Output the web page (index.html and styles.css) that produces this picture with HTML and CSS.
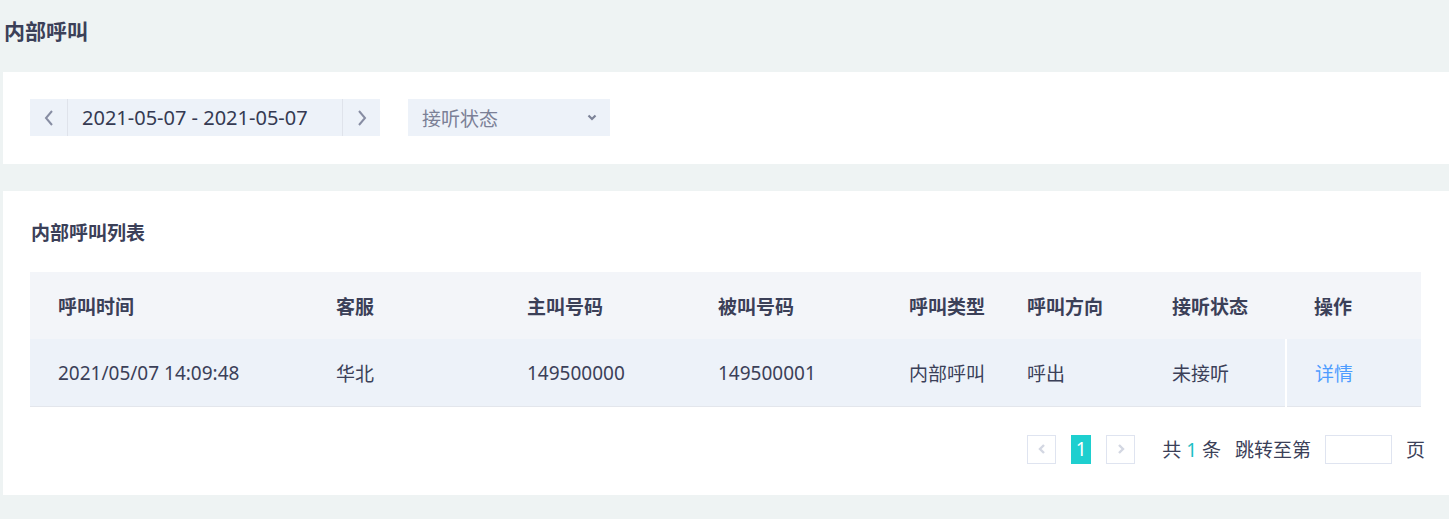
FILE: index.html
```html
<!DOCTYPE html>
<html>
<head>
  <meta charset="utf-8">
  <title>内部呼叫</title>
  <link rel="stylesheet" href="styles.css">
</head>
<body>
  <h2 class="page-title">内部呼叫</h2>

  <div class="card filter-card">
    <div class="date-range">
      <span class="date-arrow">
        <svg width="12" height="18" viewBox="0 0 12 18"><path d="M9 2 L3 9 L9 16" fill="none" stroke="#878da3" stroke-width="2"/></svg>
      </span>
      <span class="date-text">2021-05-07 - 2021-05-07</span>
      <span class="date-arrow right">
        <svg width="12" height="18" viewBox="0 0 12 18"><path d="M3 2 L9 9 L3 16" fill="none" stroke="#878da3" stroke-width="2"/></svg>
      </span>
    </div>

    <div class="select-box">
      <span class="placeholder">接听状态</span>
      <svg width="10" height="7" viewBox="0 0 10 7"><path d="M1.5 1.5 L5 5 L8.5 1.5" fill="none" stroke="#7d8398" stroke-width="2.2"/></svg>
    </div>
  </div>

  <div class="card list-card">
    <h3 class="list-title">内部呼叫列表</h3>

    <table class="call-table">
      <thead>
        <tr>
          <th class="c-time">呼叫时间</th>
          <th class="c-agent">客服</th>
          <th class="c-num">主叫号码</th>
          <th class="c-num">被叫号码</th>
          <th class="c-type">呼叫类型</th>
          <th class="c-dir">呼叫方向</th>
          <th class="c-state">接听状态</th>
          <th class="c-op">操作</th>
        </tr>
      </thead>
      <tbody>
        <tr>
          <td>2021/05/07 14:09:48</td>
          <td>华北</td>
          <td>149500000</td>
          <td>149500001</td>
          <td>内部呼叫</td>
          <td>呼出</td>
          <td>未接听</td>
          <td class="op-cell"><a href="#">详情</a></td>
        </tr>
      </tbody>
    </table>

    <div class="pager">
      <span class="page-btn">
        <svg width="10" height="12" viewBox="0 0 10 12"><path d="M7 2 L3 6 L7 10" fill="none" stroke="#d3d7e2" stroke-width="2.4"/></svg>
      </span>
      <span class="page-num">1</span>
      <span class="page-btn">
        <svg width="10" height="12" viewBox="0 0 10 12"><path d="M3 2 L7 6 L3 10" fill="none" stroke="#d3d7e2" stroke-width="2.4"/></svg>
      </span>
      <span class="total">共 <em>1</em> 条</span>
      <span class="jump">跳转至第</span>
      <input class="jump-input" type="text">
      <span class="jump-unit">页</span>
    </div>
  </div>
</body>
</html>
```

FILE: styles.css
```css
body {
  margin: 0;
  padding: 0 0 0 3px;
  background: #eef3f3;
  font-family: "Noto Sans", "Noto Sans CJK SC", sans-serif;
  color: #3b4058;
  font-size: 19px;
}

.page-title {
  margin: 0;
  height: 72px;
  line-height: 62px;
  padding-left: 1px;
  font-size: 21px;
  font-weight: bold;
  color: #3b4058;
}

.card {
  background: white;
}

.filter-card {
  height: 92px;
  padding: 27px 0 0 27px;
  box-sizing: border-box;
  display: flex;
  gap: 28px;
  margin-bottom: 27px;
}

.date-range {
  display: flex;
  height: 37px;
  width: 350px;
  background: #edf2f9;
  align-items: stretch;
}

.date-arrow {
  width: 37px;
  display: flex;
  align-items: center;
  justify-content: center;
  border-right: 1px solid #dfe3eb;
}

.date-arrow.right {
  border-right: none;
  border-left: 1px solid #dfe3eb;
}

.date-text {
  flex: 1;
  line-height: 37px;
  padding-left: 14px;
  font-size: 20px;
  color: #353a52;
  white-space: nowrap;
}

.select-box {
  width: 202px;
  height: 37px;
  background: #edf2f9;
  display: flex;
  align-items: center;
  justify-content: space-between;
  padding: 0 13px 0 14px;
  box-sizing: border-box;
}

.placeholder {
  color: #7b8096;
  font-size: 19px;
}

.list-card {
  height: 304px;
  padding: 27px 27px 0 27px;
  box-sizing: border-box;
}

.list-title {
  margin: 0 0 0 1px;
  font-size: 19px;
  font-weight: bold;
  line-height: 30px;
  height: 54px;
}

.call-table {
  width: 1391px;
  border-collapse: collapse;
  font-size: 19px;
}

.call-table th,
.call-table td {
  height: 67px;
  padding: 0 0 0 28px;
  text-align: left;
  white-space: nowrap;
}

.call-table th {
  background: #f3f5f9;
  font-weight: bold;
}

.call-table td {
  background: #edf2f9;
  border-bottom: 1px solid #e3e6ec;
  color: #3b4058;
}

.c-time { width: 250px; }
.c-agent { width: 163px; }
.c-num { width: 163px; }
.c-type { width: 90px; }
.c-dir { width: 117px; }
.c-state { width: 114px; }

.op-cell {
  border-left: 2px solid white;
}

.op-cell a {
  color: #4d9cff;
  text-decoration: none;
}

.pager {
  display: flex;
  justify-content: flex-end;
  align-items: center;
  margin-top: 27px;
  margin-right: -3px;
  height: 30px;
}

.page-btn {
  width: 29px;
  height: 29px;
  border: 1px solid #dfe4f0;
  box-sizing: border-box;
  display: flex;
  align-items: center;
  justify-content: center;
}

.page-num {
  width: 20px;
  height: 29px;
  line-height: 29px;
  background: #1ecfcf;
  color: white;
  text-align: center;
  margin: 0 15px;
  font-size: 19px;
}

.total {
  margin-left: 27px;
  margin-right: 14px;
}

.total em {
  font-style: normal;
  color: #1ec0c5;
}

.jump-input {
  width: 67px;
  height: 29px;
  box-sizing: border-box;
  border: 1px solid #dfe4f0;
  margin: 0 14px;
  padding: 0;
}
```
